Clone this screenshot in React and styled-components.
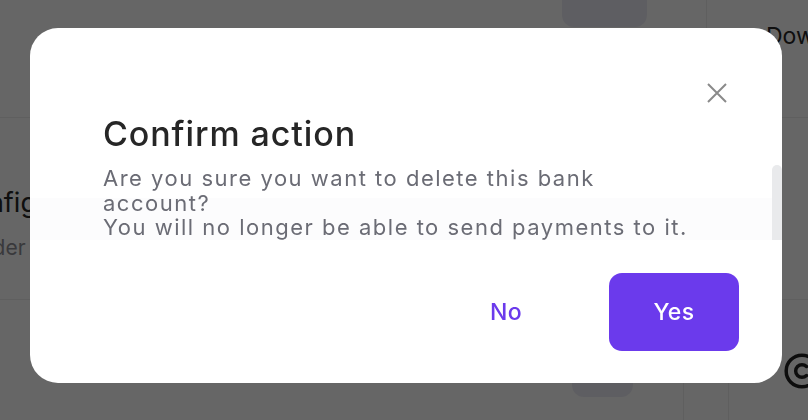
import React from "react";
import styled, { createGlobalStyle } from "styled-components";
import { Copyright } from "lucide-react";

const Global = createGlobalStyle`
  html, body { margin: 0; padding: 0; }
  body { font-family: Inter, "Noto Sans", sans-serif; background: #fff; }
  * { box-sizing: border-box; }
`;

const Page = styled.div`
  width: 808px;
  height: 420px;
  overflow: hidden;
  position: relative;
  background: #fff;
  display: flex;
  flex-direction: column;
`;

const Row = styled.div`
  height: ${(p) => p.$h}px;
  flex: none;
  display: grid;
  grid-template-columns: ${(p) => p.$cols};
  border-bottom: ${(p) => (p.$divider ? "1px solid #ededed" : "none")};
`;

const Cell = styled.div`
  border-left: ${(p) => (p.$line ? "1px solid #ededed" : "none")};
  padding: ${(p) => p.$pad || "0"};
  display: flex;
  flex-direction: column;
  align-items: flex-start;
  min-width: 0;
`;

const GhostButton = styled.div`
  width: 100%;
  height: ${(p) => p.$h}px;
  margin-top: ${(p) => p.$mt}px;
  background: #ececf5;
  border-radius: 12px;
`;

const BgTitle = styled.div`
  font-size: ${(p) => p.$size}px;
  color: ${(p) => p.$color};
  white-space: nowrap;
  line-height: 1.2;
  margin-left: ${(p) => p.$ml || 0}px;
  margin-top: ${(p) => p.$mt || 0}px;
`;

const Overlay = styled.div`
  position: fixed;
  inset: 0;
  background: rgba(0, 0, 0, 0.6);
  display: flex;
  justify-content: center;
  align-items: flex-start;
  padding: 28px 0 0 4px;
`;

const Modal = styled.div`
  width: 752px;
  height: 355px;
  background: #fff;
  border-radius: 28px;
  display: flex;
  flex-direction: column;
  overflow: hidden;
`;

const Header = styled.div`
  display: flex;
  justify-content: flex-end;
  padding: 55px 55px 0 0;
`;

const CloseButton = styled.button`
  width: 20px;
  height: 20px;
  padding: 0;
  border: none;
  background: transparent;
  display: flex;
  align-items: center;
  justify-content: center;
  cursor: pointer;
`;

const Title = styled.h2`
  margin: 11px 0 0 73px;
  font-size: 34px;
  line-height: 40px;
  font-weight: 500;
  color: #262626;
  letter-spacing: 0.9px;
`;

const ScrollFrame = styled.div`
  position: relative;
  margin-top: 11px;
  height: 75px;
  background: linear-gradient(to bottom, #fff 0 33px, #fcfcfd 33px);
`;

const ScrollArea = styled.div`
  height: 100%;
  overflow-y: auto;
  padding: 1px 0 0 73px;
  scrollbar-width: none;
  &::-webkit-scrollbar {
    display: none;
  }
`;

const ScrollThumb = styled.div`
  position: absolute;
  top: 0;
  right: 0;
  bottom: 0;
  width: 10px;
  border-radius: 5px 5px 0 0;
  background: #e9eaec;
`;

const Body = styled.p`
  margin: 0;
  max-width: 596px;
  font-size: 22px;
  line-height: 24.5px;
  letter-spacing: 1.5px;
  color: #6b6c75;
`;

const Footer = styled.div`
  margin-top: 33px;
  display: flex;
  justify-content: flex-end;
  gap: 38px;
  padding-right: 43px;
`;

const ActionButton = styled.button`
  width: 130px;
  height: 78px;
  border: none;
  border-radius: 13px;
  font-family: inherit;
  font-size: 23px;
  font-weight: 500;
  letter-spacing: 0.4px;
  cursor: pointer;
  background: ${(p) => (p.$primary ? "#6b3aec" : "transparent")};
  color: ${(p) => (p.$primary ? "#ffffff" : "#6b3aec")};
`;

export default function App() {
  return (
    <>
      <Global />
      <Page>
        <Row $h={118} $divider $cols="562px 85px 59px 1fr">
          <Cell />
          <Cell>
            <GhostButton $h={56} $mt={-29} />
          </Cell>
          <Cell />
          <Cell $line $pad="23px 0 0 59px">
            <BgTitle $size={23} $color="#262626">Download</BgTitle>
          </Cell>
        </Row>
        <Row $h={182} $divider $cols="1fr">
          <Cell $pad="69px 0 0 0">
            <BgTitle $size={27} $color="#262626" $ml={-48}>
              Configuration
            </BgTitle>
            <BgTitle $size={21} $color="#8f8f96" $ml={-31} $mt={16}>
              Order details
            </BgTitle>
          </Cell>
        </Row>
        <Row $h={120} $cols="572px 61px 50px 45px 1fr">
          <Cell />
          <Cell>
            <GhostButton $h={57} $mt={40} />
          </Cell>
          <Cell />
          <Cell $line />
          <Cell $line $pad="52px 0 0 54px">
            <Copyright size={38} strokeWidth={2.2} color="#222" />
          </Cell>
        </Row>
      </Page>
      <Overlay>
        <Modal role="dialog" aria-labelledby="confirm-title">
          <Header>
            <CloseButton aria-label="Close">
              <svg width="20" height="20" viewBox="0 0 20 20">
                <path d="M1 1 L19 19 M19 1 L1 19" stroke="#8a8a8a" strokeWidth="2" fill="none" />
              </svg>
            </CloseButton>
          </Header>
          <Title id="confirm-title">Confirm action</Title>
          <ScrollFrame>
            <ScrollArea>
              <Body>
                Are you sure you want to delete this bank account?
                <br />
                You will no longer be able to send payments to it.
              </Body>
            </ScrollArea>
            <ScrollThumb />
          </ScrollFrame>
          <Footer>
            <ActionButton>No</ActionButton>
            <ActionButton $primary>Yes</ActionButton>
          </Footer>
        </Modal>
      </Overlay>
    </>
  );
}
